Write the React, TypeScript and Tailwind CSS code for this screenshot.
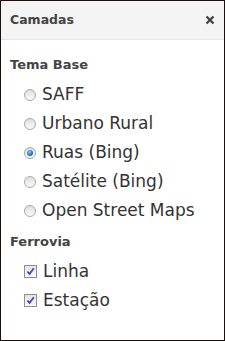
import React from "react";

const font = { fontFamily: '"DejaVu Sans", Verdana, sans-serif' };

function Radio({ checked }: { checked?: boolean }) {
  return (
    <span className="relative inline-block w-[12px] h-[12px] rounded-full border border-[#a9a9a9] bg-[linear-gradient(#dedede,#fbfbfb)] shrink-0">
      {checked && (
        <span className="absolute left-[2px] top-[2px] w-[6px] h-[6px] rounded-full bg-[radial-gradient(circle_at_40%_35%,#8fd0f5,#1f6fb5_60%,#17508a)]" />
      )}
    </span>
  );
}

function Check() {
  return (
    <span className="relative inline-flex items-center justify-center w-[13px] h-[13px] border border-[#8e8f8f] bg-[linear-gradient(#e4e4e4,#fafafa)] shrink-0">
      <svg width="9" height="9" viewBox="0 0 9 9">
        <path d="M1.5 4.5 L3.5 7 L7.8 1.2" fill="none" stroke="#3a4fa5" strokeWidth="1.8" />
      </svg>
    </span>
  );
}

function Row({ children, control }: { children: React.ReactNode; control: React.ReactNode }) {
  return (
    <div className="flex items-center h-[29px] pl-[14px] gap-[6px] text-[17px] text-[#333]">
      {control}
      <span className="leading-none">{children}</span>
    </div>
  );
}

export default function App() {
  return (
    <div style={font} className="w-[225px] h-[341px] border border-[#1e0f0f] bg-white flex flex-col overflow-hidden">
      <div className="h-[39px] bg-[#f4f4f4] border-b border-[#e5e5e5] flex items-center justify-between pl-[9px] pr-[9px] shrink-0">
        <span className="text-[12.5px] font-bold text-[#444] leading-none">Camadas</span>
        <svg width="10" height="10" viewBox="0 0 10 10">
          <path d="M1.5 1.5 L8.5 8.5 M8.5 1.5 L1.5 8.5" stroke="#444" strokeWidth="2.4" />
        </svg>
      </div>
      <div className="pl-[9px] flex flex-col">
        <div className="mt-[17px] h-[16px] flex items-center text-[13px] font-bold text-[#444]">Tema Base</div>
        <div className="mt-[7px] flex flex-col">
          <Row control={<Radio />}>SAFF</Row>
          <Row control={<Radio />}>Urbano Rural</Row>
          <Row control={<Radio checked />}>Ruas (Bing)</Row>
          <Row control={<Radio />}>Satélite (Bing)</Row>
          <Row control={<Radio />}>Open Street Maps</Row>
        </div>
        <div className="mt-[9px] h-[16px] flex items-center text-[13px] font-bold text-[#444]">Ferrovia</div>
        <div className="mt-[7px] flex flex-col">
          <Row control={<Check />}>Linha</Row>
          <Row control={<Check />}>Estação</Row>
        </div>
      </div>
    </div>
  );
}
